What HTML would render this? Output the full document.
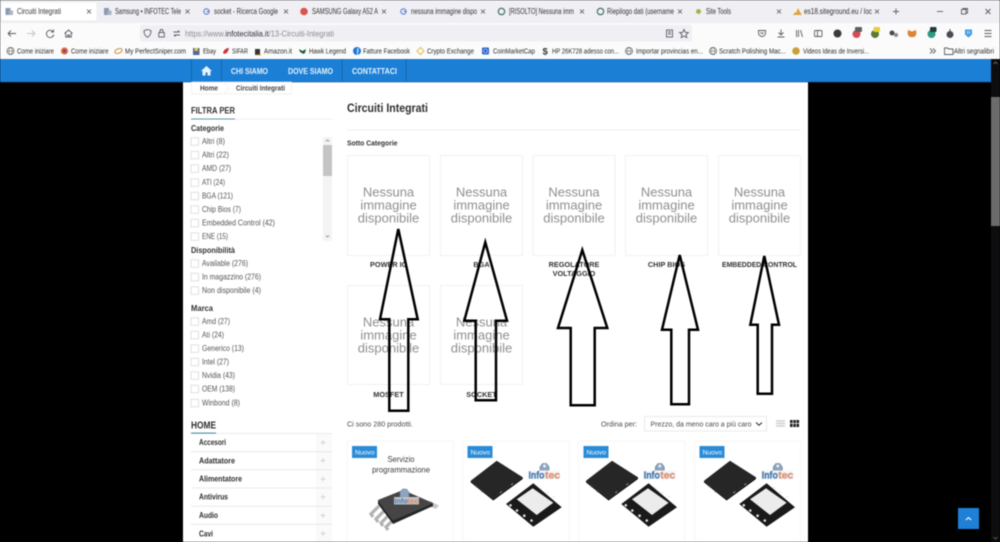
<!DOCTYPE html>
<html lang="it"><head><meta charset="utf-8"><title>Circuiti Integrati</title>
<style>
html,body{margin:0;padding:0;width:1000px;height:542px;overflow:hidden;background:#000}
svg{display:block;filter:blur(.45px)}
text{font-family:"Liberation Sans",sans-serif;white-space:pre}
.tab{font-size:7.8px;fill:#333}
.bm{font-size:7.6px;fill:#2c2c2c}
.ic{fill:none;stroke:#5b5b66;stroke-width:.9}
.x{fill:none;stroke:#555;stroke-width:.8}
.nav{font-size:7.8px;font-weight:bold;fill:#e6f1fb}
.f{font-size:7.8px;fill:#555}
.fh{font-size:8.4px;font-weight:bold;fill:#333}
.cb{fill:#fff;stroke:#d4d4d4;stroke-width:.7}
.m{font-size:7.8px;font-weight:bold;fill:#2e2e2e}
.ph{fill:#fff;stroke:#eeeeee;stroke-width:.8}
.nt{font-size:13px;fill:#8f8f8f;text-anchor:middle}
.lb{font-size:7.3px;font-weight:bold;fill:#333;text-anchor:middle}
.card{fill:#fff;stroke:#f4f4f4;stroke-width:.8}
.ar{fill:none;stroke:#000;stroke-width:2.500;stroke-linejoin:miter}
.bd{fill:#2a8bd8}
.bt{font-size:6.8px;fill:#fff}
.sep{stroke:#e6e6e6;stroke-width:.8}
.pl{stroke:#c9c9c9;stroke-width:.7}
</style></head><body>
<svg width="1000" height="542" viewBox="0 0 1000 542" xmlns="http://www.w3.org/2000/svg">
<defs>
<g id="gicon"><circle cx="0" cy="0" r="2.700" fill="none" stroke="#4f86e8" stroke-width="1.100"/><path d="M0 0h2.800" stroke="#d9534a" stroke-width="1"/></g>
<g id="pageic"><rect x="-3.500" y="-3.500" width="5" height="7" fill="#8b9bb0"/><rect x="0" y="-1" width="4" height="4.500" fill="#aab4c2"/></g>
<g id="globe"><circle cx="0" cy="0" r="3.500" fill="none" stroke="#555" stroke-width=".7"/><ellipse cx="0" cy="0" rx="1.600" ry="3.500" fill="none" stroke="#555" stroke-width=".5"/><path d="M-3.500 0h7" stroke="#555" stroke-width=".5"/></g>
<g id="cb"><rect x="0" y="-3.700" width="7.500" height="7.500" class="cb"/></g>
<g id="nimg">
<text class="nt" x="0" y="4">Nessuna</text>
<text class="nt" x="0" y="17">immagine</text>
<text class="nt" x="0" y="30">disponibile</text>
</g>
<g id="logo">
<path d="M540 471v-4l2.500-3.500h4l2.500 3.500v4z" fill="#8fa4bd" stroke="#5f7d9e" stroke-width=".6"/>
<circle cx="544.500" cy="466" r="1.500" fill="#e9eef4"/>
<rect x="528" y="470.500" width="32" height="9" rx="1" fill="#f3f6fa"/>
<text x="528.500" y="478.600" font-size="10" font-weight="bold" fill="#4d7fb5" stroke="#2f5f92" stroke-width=".25" textLength="16" lengthAdjust="spacingAndGlyphs">Info</text>
<text x="545" y="478.600" font-size="10" font-weight="bold" fill="#e59a78" stroke="#c96f4a" stroke-width=".25" textLength="15" lengthAdjust="spacingAndGlyphs">tec</text>
</g>
<g id="chips">
<polygon points="496.700,460.700 522.700,477.300 493.300,499 470.700,480.700" fill="#262626"/>
<polygon points="470.700,480.700 493.300,499 522.700,477.300 522.700,479 493.300,500.500 470.700,482.400" fill="#0a0a0a"/>
<path d="M475 486l2 1.500M481 491l2 1.500M500 493l2-1.500M511 485l2-1.500" stroke="#999" stroke-width=".9"/>
<polygon points="533.300,483.300 561.700,507.300 533.300,526.700 506,504" fill="#1a1a1a"/>
<polygon points="532.700,488.300 553.300,502.700 536.700,515 516.700,499.300" fill="#ececec"/>
<circle cx="510.500" cy="505.300" r="1.300" fill="#e2e2e2"/><circle cx="517" cy="510.500" r="1.300" fill="#e2e2e2"/><circle cx="524.300" cy="515.700" r="1.300" fill="#e2e2e2"/><circle cx="531.500" cy="520.500" r="1.300" fill="#e2e2e2"/>
<path d="M539.500 487l2.500 1.700M546 491.500l2.500 1.700M552.500 496l2.500 1.700" stroke="#eee" stroke-width="1.300"/>
<use href="#logo"/>
</g>
</defs>

<!-- page -->
<rect width="1000" height="542" fill="#000"/>
<rect x="183" y="82" width="625" height="460" fill="#fff"/>

<!-- browser chrome -->
<rect width="1000" height="24" fill="#f0f0f4"/>
<rect y="23" width="1000" height="36" fill="#fbfbfc"/>
<rect x="1" y="2" width="96" height="19" rx="2.500" fill="#fff" stroke="#e2e2e6" stroke-width=".5"/>

<use href="#pageic" x="9" y="11.500"/><text class="tab" x="17" y="14" textLength="44" lengthAdjust="spacingAndGlyphs">Circuiti Integrati</text><path class="x" d="M87 9.500l4 4m0-4l-4 4"/>
<use href="#pageic" x="107.500" y="11.500"/><text class="tab" x="115" y="14" textLength="66" lengthAdjust="spacingAndGlyphs">Samsung • INFOTEC Tele</text><path class="x" d="M185.500 9.500l4 4m0-4l-4 4"/>
<use href="#gicon" x="206.500" y="11.500"/><text class="tab" x="214" y="14" textLength="64" lengthAdjust="spacingAndGlyphs">socket - Ricerca Google</text><path class="x" d="M284 9.500l4 4m0-4l-4 4"/>
<circle cx="304" cy="11.500" r="3.800" fill="#d9534f"/><text class="tab" x="312" y="14" textLength="66" lengthAdjust="spacingAndGlyphs">SAMSUNG Galaxy A52 A</text><path class="x" d="M382 9.500l4 4m0-4l-4 4"/>
<use href="#gicon" x="403.500" y="11.500"/><text class="tab" x="411" y="14" textLength="66" lengthAdjust="spacingAndGlyphs">nessuna immagine dispo</text><path class="x" d="M481 9.500l4 4m0-4l-4 4"/>
<circle cx="501.500" cy="11.500" r="3.200" fill="none" stroke="#4d7a78" stroke-width="1.300"/><text class="tab" x="509" y="14" textLength="65" lengthAdjust="spacingAndGlyphs">[RISOLTO] Nessuna imm</text><path class="x" d="M580 9.500l4 4m0-4l-4 4"/>
<circle cx="600.500" cy="11.500" r="3.200" fill="none" stroke="#4d7a78" stroke-width="1.300"/><text class="tab" x="607" y="14" textLength="67" lengthAdjust="spacingAndGlyphs">Riepilogo dati (username</text><path class="x" d="M678 9.500l4 4m0-4l-4 4"/>
<circle cx="698.500" cy="11.500" r="2.500" fill="#9cb84a"/><text class="tab" x="706" y="14" textLength="25" lengthAdjust="spacingAndGlyphs">Site Tools</text><path class="x" d="M777 9.500l4 4m0-4l-4 4"/>
<path d="M793 15l2-3 1 1 2-5 2 4 2 3z" fill="#e0a33f"/><text class="tab" x="804" y="14" textLength="68" lengthAdjust="spacingAndGlyphs">es18.siteground.eu / loc</text><path class="x" d="M875 9.500l4 4m0-4l-4 4"/>
<path class="ic" d="M896 8.500v6m-3-3h6"/>
<path class="ic" d="M937 11.500h6"/>
<rect class="ic" x="961.500" y="9.500" width="4.500" height="4.500"/><path class="ic" d="M963 9.500v-1h4.500v4.500h-1.500"/>
<path class="ic" d="M985.500 9l5 5m0-5l-5 5"/>

<!-- toolbar -->
<path class="ic" d="M8 33.500h8m-8 0l3-3m-3 3l3 3"/>
<path d="M27 33.500h8m0 0l-3-3m3 3l-3 3" fill="none" stroke="#c4c4c8" stroke-width=".9"/>
<path class="ic" d="M53 31.500a3.700 3.700 0 1 0 .8 3M53.500 29.500v2.500h-2.500"/>
<path class="ic" d="M64.500 33.500l4-3.500 4 3.500M65.700 33v4h5.600v-4M67.700 37v-2h1.800v2"/>
<rect x="140" y="25" width="552" height="16.500" rx="2" fill="#f0f0f4"/>
<path class="ic" d="M147.500 29.500l3.500 1.200c0 3-1 5.300-3.500 6.500-2.500-1.200-3.500-3.500-3.500-6.500z"/>
<rect class="ic" x="158.800" y="32.500" width="5.500" height="4.500"/><path class="ic" d="M160 32.500v-1.500a1.500 1.500 0 0 1 3 0v1.500"/>
<path class="ic" d="M173.500 32h6m0 0l-1.500-1.500M180 35h-6m0 0l1.500 1.500"/>
<text x="185" y="36.500" font-size="7.800" fill="#8a8a90" textLength="149" lengthAdjust="spacingAndGlyphs">https://www.<tspan fill="#30303a">infotecitalia.it</tspan>/13-Circuiti-Integrati</text>
<rect class="ic" x="666.500" y="30" width="6" height="7"/><path class="ic" d="M668 32h3M668 34h3"/>
<path class="ic" d="M684 29.500l1.300 2.800 3 .3-2.300 2 .7 3-2.700-1.600-2.700 1.600.7-3-2.300-2 3-.3z"/>
<path class="ic" d="M758.500 30.500h7v2.500a3.500 3.500 0 0 1-7 0zM760.300 32.300l1.700 1.500 1.700-1.500"/>
<path class="ic" d="M781 29.500v5.500m-2.500-2.500l2.500 2.500 2.500-2.500M777.500 37h7"/>
<path class="ic" d="M796.500 30v7M798.500 30v7M800.500 30l2 7"/>
<rect class="ic" x="814.500" y="30.500" width="7.500" height="6" rx="1"/><path class="ic" d="M817.500 30.500v6"/>
<circle cx="837.500" cy="33.500" r="4" fill="#3a3a3a"/>
<circle cx="856.500" cy="34" r="4" fill="#d84a55"/><rect x="855" y="27" width="7" height="5" rx="1" fill="#5f5f66"/>
<circle cx="875" cy="34" r="4" fill="#5a7a35"/><rect x="873.500" y="27" width="6.500" height="5" rx="1" fill="#e4cf3a"/>
<circle cx="892" cy="33" r="2.500" fill="#4a4a4a"/><circle cx="896" cy="35" r="2" fill="#888"/>
<path d="M908 30l4 1.500 4-1.500 .5 4-2 3h-5l-2-3z" fill="#d9833a"/>
<circle cx="931.500" cy="34" r="4" fill="#2d9a86"/><rect x="930" y="27" width="6.500" height="5" rx="1" fill="#1f3d3a"/>
<circle cx="950" cy="34.500" r="3.500" fill="#4c4c54"/><rect x="949.500" y="29" width="1" height="2.500" fill="#4c4c54"/>
<path d="M965 29.500h7v5l-3.500 3-3.500-3z" fill="#3f9ae0"/><path d="M967.500 31v3M969.500 31v3" stroke="#fff" stroke-width=".7"/>
<path class="ic" d="M984.500 30.500h7M984.500 33.500h7M984.500 36.500h7"/>

<!-- bookmarks -->
<use href="#globe" x="10.500" y="51"/><text class="bm" x="17" y="53.500" textLength="37" lengthAdjust="spacingAndGlyphs">Come iniziare</text>
<circle cx="64.500" cy="51" r="3.600" fill="#e8702f"/><circle cx="64.500" cy="51" r="1.700" fill="#7a3fb0"/><text class="bm" x="71" y="53.500" textLength="37.500" lengthAdjust="spacingAndGlyphs">Come iniziare</text>
<ellipse cx="118.500" cy="51" rx="3.800" ry="2.200" fill="none" stroke="#caa05a" stroke-width="1.200" transform="rotate(-20 118.500 51)"/><text class="bm" x="125" y="53.500" textLength="61" lengthAdjust="spacingAndGlyphs">My PerfectSniper.com</text>
<rect x="193" y="48" width="6.500" height="7" fill="#4c6a9a"/><rect x="194.500" y="48" width="3.500" height="3" fill="#e0c24a"/><text class="bm" x="203" y="53.500" textLength="13" lengthAdjust="spacingAndGlyphs">Ebay</text>
<path d="M223 53c2 2 5 0 6-5-2 0-5 1-6 5z" fill="#cf3138"/><text class="bm" x="232" y="53.500" textLength="16" lengthAdjust="spacingAndGlyphs">SIFAR</text>
<rect x="255" y="49" width="5" height="5.500" fill="#333"/><path d="M255 55h6" stroke="#e0a030" stroke-width=".9"/><text class="bm" x="264" y="53.500" textLength="28" lengthAdjust="spacingAndGlyphs">Amazon.it</text>
<path d="M299 49l3.500 2 3.500-2-1 4-2 1-1-1-2-1z" fill="#1f5d38"/><text class="bm" x="309" y="53.500" textLength="37" lengthAdjust="spacingAndGlyphs">Hawk Legend</text>
<circle cx="357" cy="51" r="4" fill="#1d77d8"/><path d="M357.500 55v-4h1.500M357.500 51v-1.500q0-1 1.500-1" fill="none" stroke="#fff" stroke-width=".8"/><text class="bm" x="363" y="53.500" textLength="47" lengthAdjust="spacingAndGlyphs">Fatture Facebook</text>
<path d="M420.500 47.500l3.500 3.500-3.500 3.500-3.500-3.500z" fill="none" stroke="#e6c35a" stroke-width="1.200"/><text class="bm" x="427" y="53.500" textLength="47" lengthAdjust="spacingAndGlyphs">Crypto Exchange</text>
<rect x="482" y="47.500" width="7" height="7" rx="1.200" fill="#2a5ed0"/><circle cx="485.500" cy="51" r="2" fill="none" stroke="#fff" stroke-width=".6"/><text class="bm" x="493" y="53.500" textLength="42" lengthAdjust="spacingAndGlyphs">CoinMarketCap</text>
<text x="542.500" y="54.500" font-size="9.500" font-weight="bold" fill="#333">$</text><text class="bm" x="552" y="53.500" textLength="67" lengthAdjust="spacingAndGlyphs">HP 26K728 adesso con...</text>
<use href="#globe" x="629" y="51"/><text class="bm" x="636" y="53.500" textLength="67" lengthAdjust="spacingAndGlyphs">Importar provincias en...</text>
<use href="#globe" x="713" y="51"/><text class="bm" x="719" y="53.500" textLength="67" lengthAdjust="spacingAndGlyphs">Scratch Polishing Mac...</text>
<circle cx="796" cy="51" r="3.800" fill="#c9a13a"/><text class="bm" x="803" y="53.500" textLength="66" lengthAdjust="spacingAndGlyphs">Videos Ideas de Inversi...</text>
<path class="ic" d="M930 48.500l2.500 2.500-2.500 2.500M933 48.500l2.500 2.500-2.500 2.500"/>
<path class="ic" d="M944.500 48h3l1 1h4.500v5.500h-8.500z"/><text class="bm" x="954" y="53.500" textLength="40" lengthAdjust="spacingAndGlyphs">Altri segnalibri</text>

<!-- nav -->
<rect y="59" width="991" height="23" fill="#1b7fd6"/>
<rect y="81.500" width="991" height=".8" fill="#14609f"/>
<path d="M191.500 59v23M221.500 59v23M342 59v23M406 59v23" stroke="#14609f" stroke-width=".8"/>
<path d="M201 71l5.500-5 5.500 5h-1.500v4.500h-3v-3h-2v3h-3V71z" fill="#e8f2fb"/>
<text class="nav" x="231" y="74" textLength="37" lengthAdjust="spacingAndGlyphs">CHI SIAMO</text>
<text class="nav" x="288" y="74" textLength="45" lengthAdjust="spacingAndGlyphs">DOVE SIAMO</text>
<text class="nav" x="352" y="74" textLength="45" lengthAdjust="spacingAndGlyphs">CONTATTACI</text>

<!-- window scrollbar -->
<rect x="991" y="59" width="9" height="483" fill="#0d0d0f"/>
<rect x="991" y="97" width="9" height="129" fill="#6b6b6b"/>
<path d="M993.500 64l2-2 2 2" fill="none" stroke="#777" stroke-width=".8"/>
<path d="M993.500 537l2 2 2-2" fill="none" stroke="#666" stroke-width=".8"/>

<!-- breadcrumb -->
<rect x="191.500" y="82" width="100" height="12" fill="#fff" stroke="#ececec" stroke-width=".7"/>
<path d="M224 82l5 6-5 6" fill="#fff" stroke="#ececec" stroke-width=".7"/>
<text x="200" y="90.500" font-size="7.400" font-weight="bold" fill="#444" textLength="18" lengthAdjust="spacingAndGlyphs">Home</text>
<text x="236" y="90.500" font-size="7.400" font-weight="bold" fill="#444" textLength="49" lengthAdjust="spacingAndGlyphs">Circuiti Integrati</text>

<!-- sidebar -->
<text x="191" y="113.500" font-size="9.500" font-weight="bold" fill="#333" textLength="44" lengthAdjust="spacingAndGlyphs">FILTRA PER</text>
<rect x="191" y="118.800" width="141" height=".8" fill="#eaeaea"/><rect x="191" y="118.500" width="44" height="1" fill="#5a9aa8"/>
<text class="fh" x="191" y="131" textLength="33" lengthAdjust="spacingAndGlyphs">Categorie</text>
<rect x="323" y="137" width="9" height="104" fill="#f4f4f4"/><rect x="323" y="145" width="9" height="31" fill="#c4c4c4"/>
<path d="M325.800 141.500l1.700-1.500 1.700 1.500M325.800 235.500l1.700 1.500 1.700-1.500" fill="none" stroke="#777" stroke-width=".7"/>

<use href="#cb" x="191" y="141.500"/><text class="f" x="202" y="144" textLength="23" lengthAdjust="spacingAndGlyphs">Altri (8)</text>
<use href="#cb" x="191" y="155"/><text class="f" x="202" y="157.500" textLength="27" lengthAdjust="spacingAndGlyphs">Altri (22)</text>
<use href="#cb" x="191" y="168.500"/><text class="f" x="202" y="171" textLength="29" lengthAdjust="spacingAndGlyphs">AMD (27)</text>
<use href="#cb" x="191" y="182.500"/><text class="f" x="202" y="185" textLength="23" lengthAdjust="spacingAndGlyphs">ATI (24)</text>
<use href="#cb" x="191" y="196"/><text class="f" x="202" y="198.500" textLength="31" lengthAdjust="spacingAndGlyphs">BGA (121)</text>
<use href="#cb" x="191" y="209.500"/><text class="f" x="202" y="212" textLength="39" lengthAdjust="spacingAndGlyphs">Chip Bios (7)</text>
<use href="#cb" x="191" y="223"/><text class="f" x="202" y="225.500" textLength="73" lengthAdjust="spacingAndGlyphs">Embedded Control (42)</text>
<use href="#cb" x="191" y="236.500"/><text class="f" x="202" y="239" textLength="26" lengthAdjust="spacingAndGlyphs">ENE (15)</text>

<text class="fh" x="191" y="253" textLength="44" lengthAdjust="spacingAndGlyphs">Disponibilità</text>
<use href="#cb" x="191" y="263.500"/><text class="f" x="202" y="266" textLength="46" lengthAdjust="spacingAndGlyphs">Available (276)</text>
<use href="#cb" x="191" y="277"/><text class="f" x="202" y="279.500" textLength="59" lengthAdjust="spacingAndGlyphs">In magazzino (276)</text>
<use href="#cb" x="191" y="290.500"/><text class="f" x="202" y="293" textLength="59" lengthAdjust="spacingAndGlyphs">Non disponibile (4)</text>

<text class="fh" x="191" y="311" textLength="22" lengthAdjust="spacingAndGlyphs">Marca</text>
<use href="#cb" x="191" y="321.500"/><text class="f" x="202" y="324" textLength="28" lengthAdjust="spacingAndGlyphs">Amd (27)</text>
<use href="#cb" x="191" y="335"/><text class="f" x="202" y="337.500" textLength="22" lengthAdjust="spacingAndGlyphs">Ati (24)</text>
<use href="#cb" x="191" y="348.500"/><text class="f" x="202" y="351" textLength="42" lengthAdjust="spacingAndGlyphs">Generico (13)</text>
<use href="#cb" x="191" y="362"/><text class="f" x="202" y="364.500" textLength="27" lengthAdjust="spacingAndGlyphs">Intel (27)</text>
<use href="#cb" x="191" y="375.500"/><text class="f" x="202" y="378" textLength="33" lengthAdjust="spacingAndGlyphs">Nvidia (43)</text>
<use href="#cb" x="191" y="389"/><text class="f" x="202" y="391.500" textLength="33" lengthAdjust="spacingAndGlyphs">OEM (138)</text>
<use href="#cb" x="191" y="403"/><text class="f" x="202" y="405.500" textLength="38" lengthAdjust="spacingAndGlyphs">Winbond (8)</text>

<text x="191" y="428.500" font-size="10" font-weight="bold" fill="#2e2e2e" textLength="25" lengthAdjust="spacingAndGlyphs">HOME</text>
<rect x="316" y="434" width="16" height="108" fill="#fafafa"/>
<path class="sep" d="M191 433.500h141M191 451.700h141M191 469.800h141M191 488h141M191 506.200h141M191 524.300h141"/>
<rect x="191" y="432.500" width="25" height="1.200" fill="#5a9aa8"/>
<text class="m" x="199" y="445" textLength="27" lengthAdjust="spacingAndGlyphs">Accesori</text>
<text class="m" x="199" y="463.500" textLength="36" lengthAdjust="spacingAndGlyphs">Adattatore</text>
<text class="m" x="199" y="481.500" textLength="43" lengthAdjust="spacingAndGlyphs">Alimentatore</text>
<text class="m" x="199" y="499.500" textLength="29" lengthAdjust="spacingAndGlyphs">Antivirus</text>
<text class="m" x="199" y="518" textLength="19" lengthAdjust="spacingAndGlyphs">Audio</text>
<text class="m" x="199" y="536.500" textLength="14" lengthAdjust="spacingAndGlyphs">Cavi</text>
<path class="pl" d="M320.500 442.500h5m-2.500-2.500v5M320.500 460.500h5m-2.500-2.500v5M320.500 479h5m-2.500-2.500v5M320.500 497h5m-2.500-2.500v5M320.500 515.500h5m-2.500-2.500v5M320.500 533.500h5m-2.500-2.500v5"/>

<!-- main -->
<text x="347" y="112" font-size="11.500" font-weight="bold" fill="#2e2e2e" textLength="81" lengthAdjust="spacingAndGlyphs">Circuiti Integrati</text>
<rect x="347" y="129.500" width="454" height="1" fill="#eeeeee"/>
<text x="347" y="145.500" font-size="7.400" font-weight="bold" fill="#333" textLength="50.500" lengthAdjust="spacingAndGlyphs">Sotto Categorie</text>

<rect class="ph" x="347.500" y="155.500" width="82" height="100"/>
<rect class="ph" x="440.500" y="155.500" width="82" height="100"/>
<rect class="ph" x="533" y="155.500" width="82" height="100"/>
<rect class="ph" x="625.500" y="155.500" width="82" height="100"/>
<rect class="ph" x="718.500" y="155.500" width="82" height="100"/>
<rect class="ph" x="347.500" y="285.500" width="82" height="99"/>
<rect class="ph" x="440.500" y="285.500" width="82" height="99"/>
<use href="#nimg" x="388.500" y="192.500"/>
<use href="#nimg" x="481.500" y="192.500"/>
<use href="#nimg" x="574" y="192.500"/>
<use href="#nimg" x="666.500" y="192.500"/>
<use href="#nimg" x="759.500" y="192.500"/>
<use href="#nimg" x="388.500" y="322.500"/>
<use href="#nimg" x="481.500" y="322.500"/>

<text class="lb" x="388.500" y="267">POWER IC</text>
<text class="lb" x="481.500" y="267">BGA</text>
<text class="lb" x="574" y="267">REGOLATORE</text>
<text class="lb" x="574" y="276">VOLTAGGIO</text>
<text class="lb" x="666.500" y="267">CHIP BIOS</text>
<text class="lb" x="759.500" y="267" textLength="75" lengthAdjust="spacingAndGlyphs">EMBEDDED CONTROL</text>
<text class="lb" x="388.500" y="397">MOSFET</text>
<text class="lb" x="481.500" y="397">SOCKET</text>

<!-- hand drawn arrows -->
<path class="ar" d="M398.300 229L417.700 319.300H408.300V410.700H389.300V319.300H380Z"/>
<path class="ar" d="M485.300 242.300L507 320.700H496V400.300H475.700V320.700H464.300Z"/>
<path class="ar" d="M582.300 250L607.300 328H594.700V405.300H570.700V328H558Z"/>
<path class="ar" d="M679.700 255L698 329.700H689V404.300H671.300V329.700H662Z"/>
<path class="ar" d="M764.300 256L779 324.700H772V393.700H757.700V324.700H750.300Z"/>

<!-- toolbar row -->
<text x="347" y="426.500" font-size="7.600" fill="#4a4a4a" textLength="66" lengthAdjust="spacingAndGlyphs">Ci sono 280 prodotti.</text>
<text x="601" y="426.500" font-size="7.600" fill="#4a4a4a" textLength="36" lengthAdjust="spacingAndGlyphs">Ordina per:</text>
<rect x="644.500" y="416.500" width="122" height="14.500" fill="#fff" stroke="#e6e6e6" stroke-width=".8"/>
<text x="650.500" y="426.500" font-size="7.600" fill="#4a4a4a" textLength="101" lengthAdjust="spacingAndGlyphs">Prezzo, da meno caro a più caro</text>
<path d="M756 422.500l3 2.800 3-2.800" fill="none" stroke="#333" stroke-width="1.100"/>
<path d="M776 421h9M776 423.500h9M776 426h9" stroke="#cfcfcf" stroke-width="1.400"/>
<path d="M790 420h2.600v3h-2.600zM793.300 420h2.600v3h-2.600zM796.500 420h2.600v3h-2.600zM790 423.800h2.600v3.200h-2.600zM793.300 423.800h2.600v3.200h-2.600zM796.500 423.800h2.600v3.200h-2.600z" fill="#222"/>

<!-- product cards -->
<rect class="card" x="347" y="441" width="106.500" height="110"/>
<rect class="card" x="463" y="441" width="106.500" height="110"/>
<rect class="card" x="578.500" y="441" width="106" height="110"/>
<rect class="card" x="695" y="441" width="105.500" height="110"/>

<text x="401" y="462" text-anchor="middle" font-size="8.300" fill="#3c3c3c" textLength="27" lengthAdjust="spacingAndGlyphs">Servizio</text>
<text x="401" y="472.500" text-anchor="middle" font-size="8.300" fill="#3c3c3c" textLength="58" lengthAdjust="spacingAndGlyphs">programmazione</text>
<g>
<path d="M379 506l-8 8 2 3M384 511l-8 8 2 3M389 515l-8 8 2 3M394 519l-8 8 2 3" fill="none" stroke="#b2b2b2" stroke-width="3.200"/>
<path d="M430 501l9 4.500-3 3.500-8-3z" fill="#c8c8c8"/>
<polygon points="378,500 403,490 433,503 393,520" fill="#454545"/>
<polygon points="378,500 393,520 433,503 433,506 393,524 378,504" fill="#262626"/>
<path d="M400 497v-5l2.500-3h4l2.500 3v5z" fill="#8fa4bd" stroke="#5f7d9e" stroke-width=".5"/>
<rect x="394" y="497" width="25" height="7.500" fill="#e8edf2" opacity=".75"/>
<text x="394.500" y="503.500" font-size="7.500" font-weight="bold" fill="#4d7fb5" textLength="13" lengthAdjust="spacingAndGlyphs">Info</text>
<text x="407" y="503.500" font-size="7.500" font-weight="bold" fill="#e28a63" textLength="12" lengthAdjust="spacingAndGlyphs">tec</text>
</g>
<use href="#chips"/>
<use href="#chips" x="115.300"/>
<use href="#chips" x="233.300"/>

<rect class="bd" x="352" y="446" width="25" height="12"/><text class="bt" x="355" y="454.300" textLength="19.500" lengthAdjust="spacingAndGlyphs">Nuovo</text>
<rect class="bd" x="467.500" y="446" width="25" height="12"/><text class="bt" x="470.500" y="454.300" textLength="19.500" lengthAdjust="spacingAndGlyphs">Nuovo</text>
<rect class="bd" x="583.500" y="446" width="25" height="12"/><text class="bt" x="586.500" y="454.300" textLength="19.500" lengthAdjust="spacingAndGlyphs">Nuovo</text>
<rect class="bd" x="699.500" y="446" width="25" height="12"/><text class="bt" x="702.500" y="454.300" textLength="19.500" lengthAdjust="spacingAndGlyphs">Nuovo</text>

<!-- back to top -->
<rect x="958" y="508" width="21" height="21" fill="#1f80d8"/>
<path d="M965.800 520l2.700-2.400 2.700 2.400" fill="none" stroke="#fff" stroke-width="1.100"/>
</svg>
</body></html>
